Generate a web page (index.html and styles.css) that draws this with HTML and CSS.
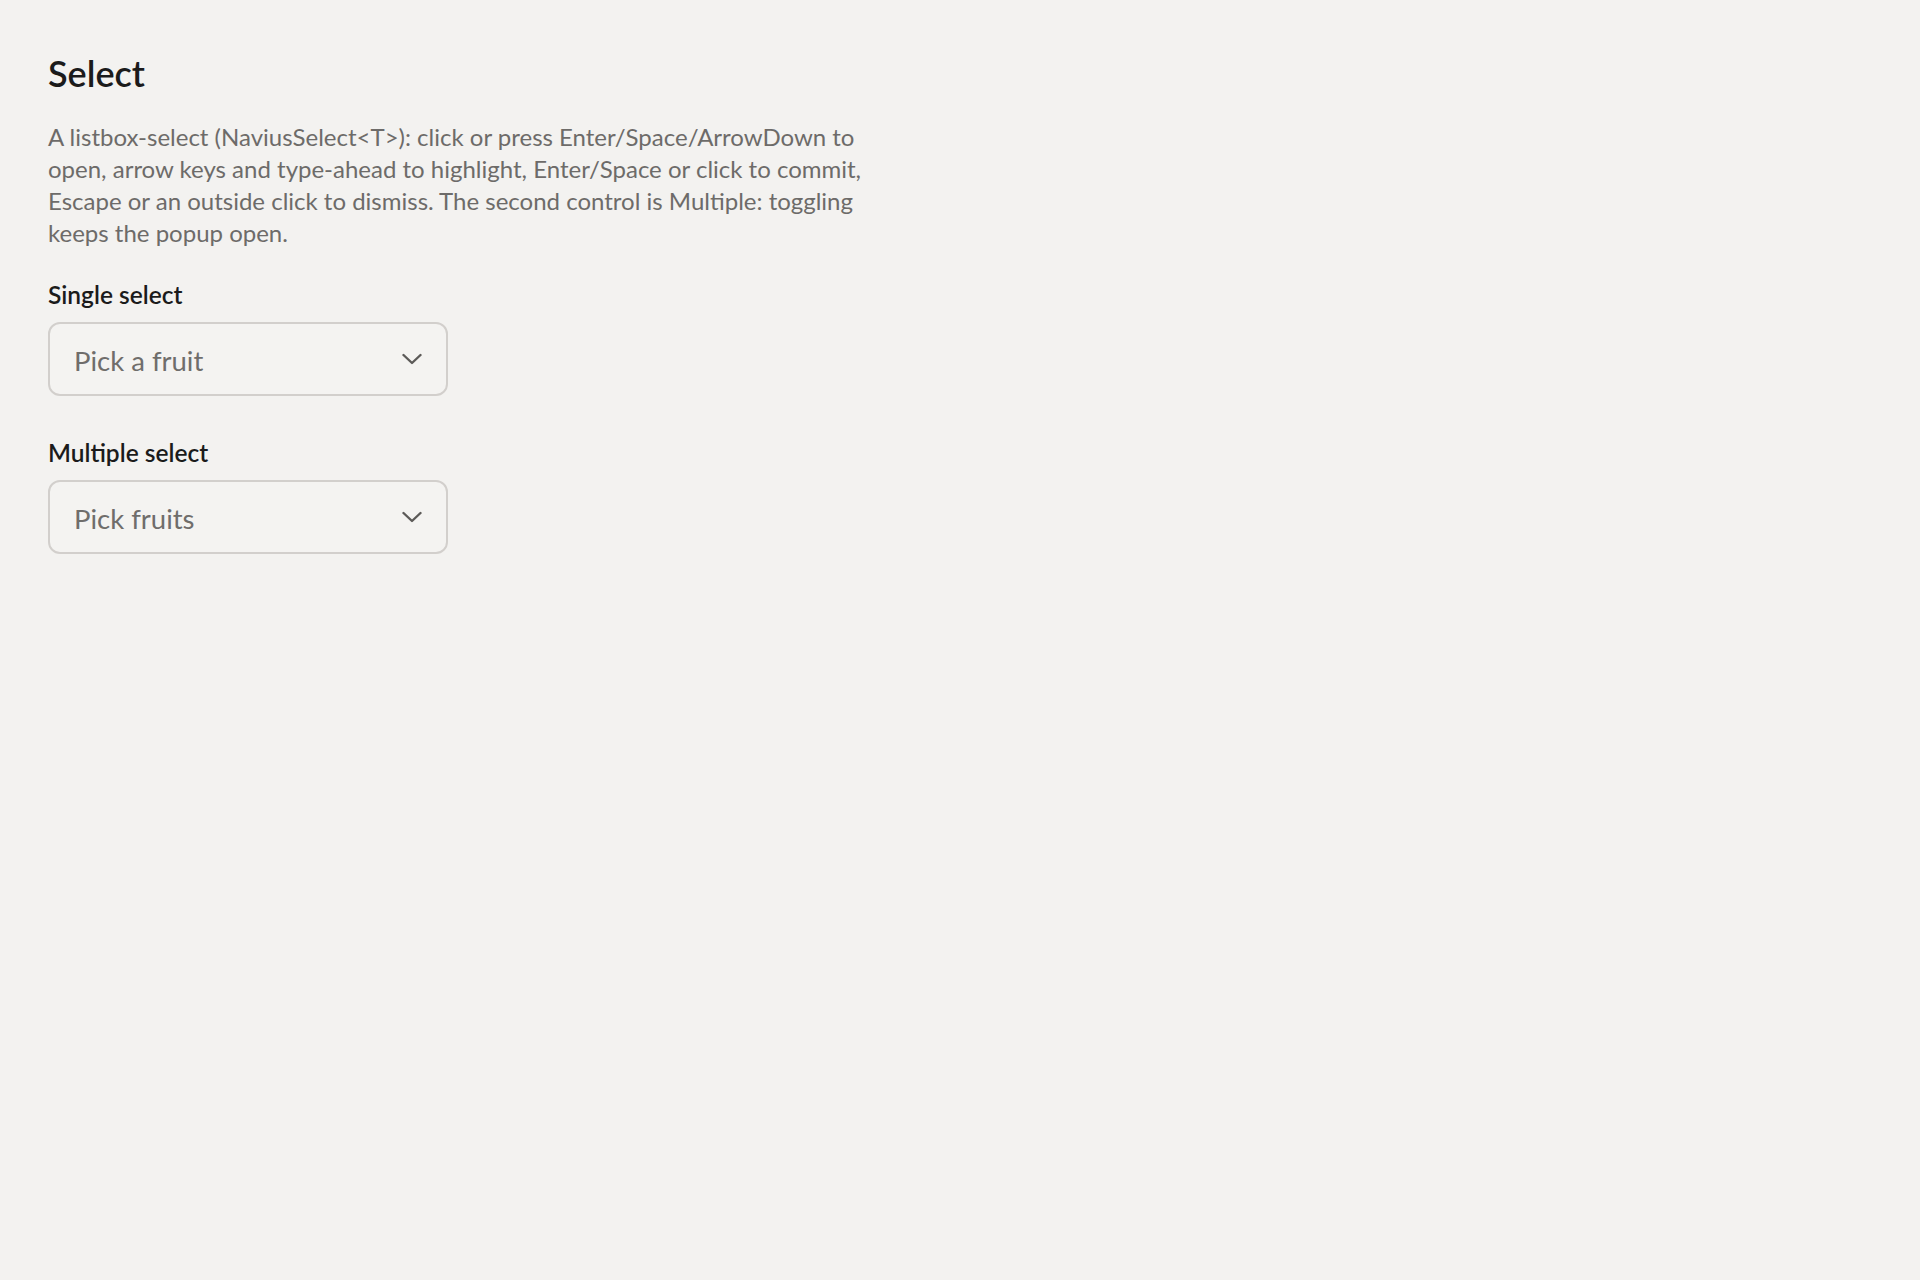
FILE: index.html
```html
<!DOCTYPE html>
<html lang="en">
<head>
    <meta charset="UTF-8">
    <meta name="viewport" content="width=device-width, initial-scale=1.0">
    <title>Select</title>
    <link rel="stylesheet" href="styles.css">
</head>
<body>

    <main class="page">
        <h1 class="page-title">Select</h1>
        <p class="page-intro">
            A listbox-select (NaviusSelect&lt;T&gt;): click or press Enter/Space/ArrowDown to
            open, arrow keys and type-ahead to highlight, Enter/Space or click to commit,
            Escape or an outside click to dismiss. The second control is Multiple: toggling
            keeps the popup open.
        </p>

        <div class="field">
            <label class="field-label" for="single-select">Single select</label>
            <button class="select" id="single-select" type="button" aria-haspopup="listbox">
                <span class="select-placeholder">Pick a fruit</span>
                <svg class="select-chevron" viewBox="0 0 20 12" aria-hidden="true">
                    <polyline points="1.5,2 10,10 18.5,2" />
                </svg>
            </button>
        </div>

        <div class="field">
            <label class="field-label" for="multiple-select">Multiple select</label>
            <button class="select" id="multiple-select" type="button" aria-haspopup="listbox">
                <span class="select-placeholder">Pick fruits</span>
                <svg class="select-chevron" viewBox="0 0 20 12" aria-hidden="true">
                    <polyline points="1.5,2 10,10 18.5,2" />
                </svg>
            </button>
        </div>
    </main>

</body>
</html>
```

FILE: styles.css
```css
body {
    font-family: 'Segoe UI', Lato, 'Open Sans', sans-serif;
    background-color: #f3f2f0;
    color: #1b1b1b;
    margin: 0;
}

.page {
    padding: 52px 48px;
}

.page-title {
    margin: 0 0 26px;
    font-size: 36px;
    font-weight: 600;
    line-height: 1.2;
}

.page-intro {
    max-width: 840px;
    margin: 0 0 30px;
    font-size: 24px;
    line-height: 32px;
    color: #6d6b69;
}


.field {
    display: flex;
    flex-direction: column;
    align-items: flex-start;
    gap: 11px;
    margin-bottom: 41px;
}

.field-label {
    font-size: 24.5px;
    font-weight: 600;
    line-height: 32px;
}


.select {
    display: flex;
    align-items: center;
    justify-content: space-between;
    box-sizing: border-box;
    width: 400px;
    height: 74px;
    padding: 2px 24px 0 24px;
    border: 2px solid #d2cfcc;
    border-radius: 12px;
    background-color: #f4f3f1;
    font: inherit;
    font-size: 27.5px;
    color: #6f6d6b;
    cursor: pointer;
}

.select-chevron {
    width: 20px;
    height: 12px;
    margin-top: -2px;
    fill: none;
    stroke: #5c5a58;
    stroke-width: 2.4;
    stroke-linecap: round;
    stroke-linejoin: round;
}
```
